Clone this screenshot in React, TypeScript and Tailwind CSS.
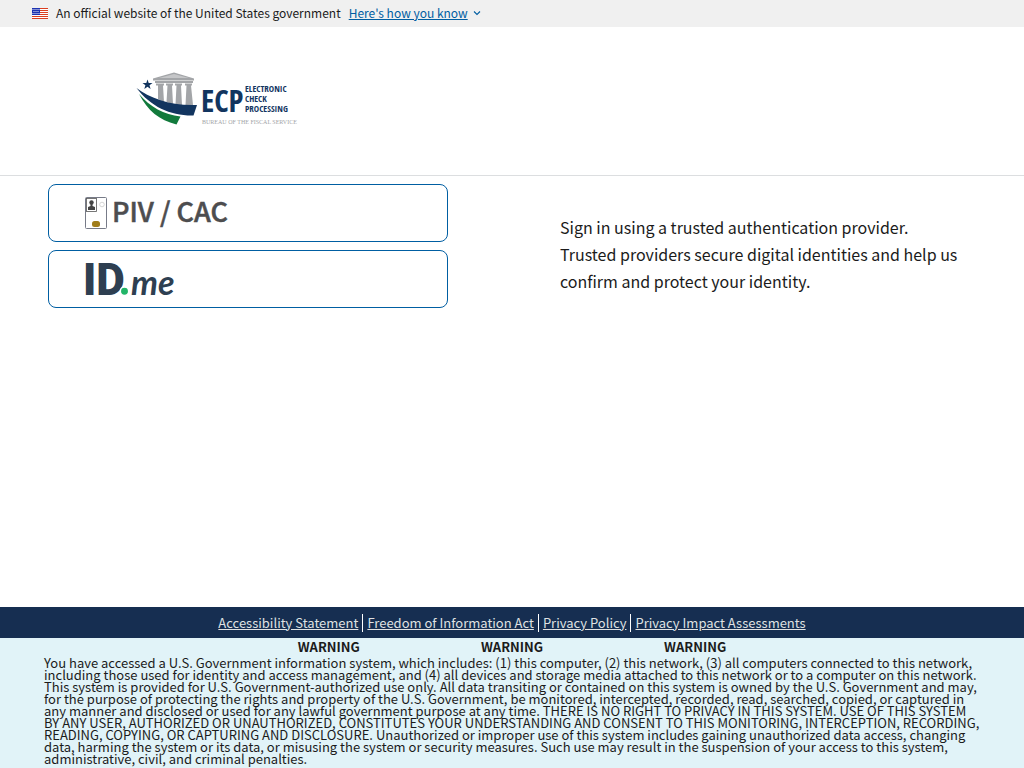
import { ReactNode } from "react";

const stripes = [0, 2, 4, 6, 8, 10];
const stars = [
  [1, 1], [3, 1], [5, 1], [7, 1],
  [2, 3], [4, 3], [6, 3],
  [1, 5], [3, 5], [5, 5], [7, 5],
];

function Flag() {
  return (
    <svg className="h-[11px] w-4 shrink-0" viewBox="0 0 16 11" aria-hidden="true">
      <rect width="16" height="11" fill="#fff" />
      {stripes.map((y) => (
        <rect key={y} y={y} width="16" height="1" fill="#db3e1f" />
      ))}
      <rect width="8" height="7" fill="#1e33b1" />
      {stars.map(([x, y]) => (
        <circle key={`${x}-${y}`} cx={x} cy={y + 0.5} r="0.6" fill="#fff" />
      ))}
    </svg>
  );
}

function Banner() {
  return (
    <section aria-label="Official website" className="flex h-[27px] items-center gap-2 bg-[#f0f0f0] px-8 pb-px text-[12px] leading-4">
      <Flag />
      <p>An official website of the United States government</p>
      <button type="button" className="flex items-center gap-1 text-[#005ea2]">
        <span className="underline">Here's how you know</span>
        <svg className="h-2.5 w-2.5" viewBox="0 0 10 10" fill="none" stroke="currentColor" strokeWidth="1.1" aria-hidden="true">
          <path d="M2 3.5 5 6.5 8 3.5" />
        </svg>
      </button>
    </section>
  );
}

function EcpLogo() {
  return (
    <svg className="h-[60px] w-[180px]" viewBox="0 0 180 60" role="img" aria-label="ECP Electronic Check Processing">
      <g fill="#a3a5a8">
        <path d="M17 8.500 38 2.500 58 8.500 58 10.500 17 10.500Z" />
        <path d="M19 11H57V13H19Z" />
        <path d="M20 13.500H28V15.500H27L28 32 22 29 22 15.500H20ZM30 13.500H37V15.500H36L37 34 30.500 32 31.500 15.500H30ZM39 13.500H46V15.500H45L46 35 39.500 34.500 40.500 15.500H39ZM49 13.500H56V15.500H55L57 35 49.500 35 50.500 15.500H49Z" />
      </g>
      <path d="M23 8 38 4 53 8Z" fill="#c5c6c8" />
      <path d="M11.500 9.500 12.700 13 16.500 13 13.500 15.200 14.600 19 11.500 16.700 8.300 19 9.400 15.200 6.500 13 10.300 13Z" fill="#12355f" />
      <path d="M0.500 18C14 28 34 36 61 35L57.500 45.500C35 46 15 37 0.500 18Z" fill="#12355f" />
      <path d="M3 24C14 37 28 44.500 44.500 46.500L40.500 54.500C23 50 12 41 3 24Z" fill="#127a3c" />
      <g className="font-['Open_Sans_Condensed','Roboto_Condensed',sans-serif] font-bold" fill="#12355f">
        <text x="65" y="42" fontSize="31">ECP</text>
        <g fontSize="9">
          <text x="109" y="22">ELECTRONIC</text>
          <text x="109" y="32">CHECK</text>
          <text x="109" y="42">PROCESSING</text>
        </g>
      </g>
      <text x="66" y="54" fontSize="6" fill="#a3a5a8" className="font-['Liberation_Serif',serif]">BUREAU OF THE FISCAL SERVICE</text>
    </svg>
  );
}

function PivLogo() {
  return (
    <svg className="h-14 w-[160px]" viewBox="0 -10 160 56" aria-hidden="true">
      <rect x="0.500" y="2.500" width="21" height="31" rx="1" fill="#fff" stroke="#777b88" strokeWidth="1" />
      <rect x="1.500" y="3.500" width="10" height="13" fill="#fff" stroke="#555" strokeWidth="0.800" />
      <circle cx="6.500" cy="7.500" r="2.200" fill="#444" />
      <path d="M5.500 9H7.500V11L10 12V15H3V12L5.500 11Z" fill="#444" />
      <circle cx="17" cy="9.500" r="2.300" fill="none" stroke="#ccc" strokeWidth="0.800" />
      <rect x="7" y="26" width="8" height="6" rx="2.500" fill="#a07d1b" />
      <text x="27" y="27" fontSize="27" fill="#4d4d4f" stroke="#4d4d4f" strokeWidth="0.500" className="font-['Noto_Sans_CJK_SC',sans-serif] font-medium">PIV / CAC</text>
    </svg>
  );
}

function IdMeLogo() {
  return (
    <svg className="h-14 w-[160px] overflow-visible" viewBox="0 -10 160 56" aria-hidden="true">
      <text x="-2" y="34" fontSize="44" fill="#2e3f51" className="font-['Roboto',sans-serif] font-black">ID</text>
      <circle cx="39.500" cy="30.300" r="4.200" fill="#21b568" stroke="#fff" strokeWidth="1.500" />
      <text x="46" y="34" fontSize="34" fill="#2e3f51" className="font-['Lato',sans-serif] font-bold italic">me</text>
    </svg>
  );
}

function Provider({ label, children }: { label: string; children: ReactNode }) {
  return (
    <button type="button" aria-label={label} className="flex h-[58px] w-full items-center rounded-lg border border-[#005ea2] bg-white px-9">
      {children}
    </button>
  );
}

const links = ["Accessibility Statement", "Freedom of Information Act", "Privacy Policy", "Privacy Impact Assessments"];

export default function App() {
  return (
    <div className="flex min-h-screen flex-col bg-white font-['Noto_Sans_CJK_SC',sans-serif] text-[#1b1b1b]">
      <Banner />
      <header className="border-b border-[#dcdee0] px-[136px] pt-[43px] pb-[45px]">
        <EcpLogo />
      </header>
      <main className="grid grow grid-cols-2 items-start gap-x-16 px-12 pt-2">
        <div className="flex max-w-[400px] flex-col gap-2">
          <Provider label="PIV / CAC"><PivLogo /></Provider>
          <Provider label="ID.me"><IdMeLogo /></Provider>
        </div>
        <p className="px-4 pt-[30px] text-[16px] leading-[27px]">
          Sign in using a trusted authentication provider. Trusted providers secure digital identities and help us confirm and protect your identity.
        </p>
      </main>
      <footer>
        <nav aria-label="Policies" className="flex h-[31px] items-center justify-center bg-[#162e51] text-[13px] leading-[18px] text-[#dfe1e2]">
          {links.map((text, i) => (
            <span key={text} className={i > 0 ? "ml-1 border-l border-white pl-1" : ""}>
              <a href="#" className="underline">{text}</a>
            </span>
          ))}
        </nav>
        <div className="bg-[#e1f3f8] px-11 pt-[3px] pb-[3px] text-[13px] leading-3">
          <div className="flex justify-center gap-[121px] pb-1 font-bold">
            <span>WARNING</span>
            <span>WARNING</span>
            <span>WARNING</span>
          </div>
          <p>
            You have accessed a U.S. Government information system, which includes: (1) this computer, (2) this network, (3) all computers connected to this network, including those used for identity and access management, and (4) all devices and storage media attached to this network or to a computer on this network. This system is provided for U.S. Government-authorized use only. All data transiting or contained on this system is owned by the U.S. Government and may, for the purpose of protecting the rights and property of the U.S. Government, be monitored, intercepted, recorded, read, searched, copied, or captured in any manner and disclosed or used for any lawful government purpose at any time. THERE IS NO RIGHT TO PRIVACY IN THIS SYSTEM. USE OF THIS SYSTEM BY ANY USER, AUTHORIZED OR UNAUTHORIZED, CONSTITUTES YOUR UNDERSTANDING AND CONSENT TO THIS MONITORING, INTERCEPTION, RECORDING, READING, COPYING, OR CAPTURING AND DISCLOSURE. Unauthorized or improper use of this system includes gaining unauthorized data access, changing data, harming the system or its data, or misusing the system or security measures. Such use may result in the suspension of your access to this system, administrative, civil, and criminal penalties.
          </p>
        </div>
      </footer>
    </div>
  );
}
